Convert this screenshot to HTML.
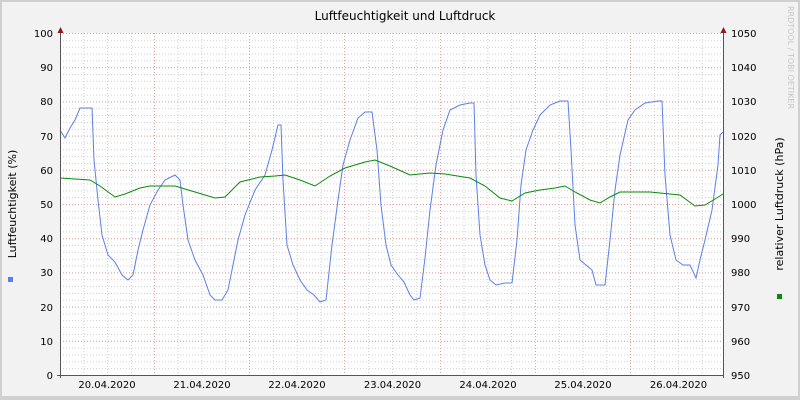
<!DOCTYPE html>
<html><head><meta charset="utf-8"><style>
html,body{margin:0;padding:0;background:#f2f2f2}
svg{display:block}
text{font-family:"DejaVu Sans","Liberation Sans",sans-serif;font-size:10px;fill:#000}
</style></head><body>
<svg width="800" height="400" xmlns="http://www.w3.org/2000/svg">
<defs>
<pattern id="mh" x="0" y="0" width="800" height="6.84" patternUnits="userSpaceOnUse" patternTransform="translate(0,33)">
<line x1="0" y1="0.5" x2="800" y2="0.5" stroke="#cfcfcf" stroke-dasharray="1,2"/>
</pattern>
</defs>
<rect x="0" y="0" width="800" height="400" fill="#d0d0d0"/>
<rect x="2" y="2" width="796" height="394" fill="#f2f2f2"/>
<rect x="60" y="33" width="664" height="342" fill="#fff"/>
<rect x="60" y="33" width="664" height="342" fill="url(#mh)"/>
<g stroke="#cfcfcf" stroke-dasharray="1,2">
<line x1="83.8" y1="33" x2="83.8" y2="375"/><line x1="107.6" y1="33" x2="107.6" y2="375"/><line x1="131.4" y1="33" x2="131.4" y2="375"/>
<line x1="178.1" y1="33" x2="178.1" y2="375"/><line x1="201.9" y1="33" x2="201.9" y2="375"/><line x1="225.7" y1="33" x2="225.7" y2="375"/>
<line x1="273.4" y1="33" x2="273.4" y2="375"/><line x1="297.2" y1="33" x2="297.2" y2="375"/><line x1="321" y1="33" x2="321" y2="375"/>
<line x1="368.7" y1="33" x2="368.7" y2="375"/><line x1="392.5" y1="33" x2="392.5" y2="375"/><line x1="416.3" y1="33" x2="416.3" y2="375"/>
<line x1="464" y1="33" x2="464" y2="375"/><line x1="487.8" y1="33" x2="487.8" y2="375"/><line x1="511.6" y1="33" x2="511.6" y2="375"/>
<line x1="559.3" y1="33" x2="559.3" y2="375"/><line x1="583.1" y1="33" x2="583.1" y2="375"/><line x1="606.9" y1="33" x2="606.9" y2="375"/>
<line x1="654.6" y1="33" x2="654.6" y2="375"/><line x1="678.4" y1="33" x2="678.4" y2="375"/><line x1="702.2" y1="33" x2="702.2" y2="375"/>
</g>
<g stroke="#e0a0a0" stroke-dasharray="1,2">
<line x1="154.5" y1="33" x2="154.5" y2="375"/><line x1="249.5" y1="33" x2="249.5" y2="375"/><line x1="344.5" y1="33" x2="344.5" y2="375"/>
<line x1="440.5" y1="33" x2="440.5" y2="375"/><line x1="535.5" y1="33" x2="535.5" y2="375"/><line x1="630.5" y1="33" x2="630.5" y2="375"/>
<line x1="60" y1="33.5" x2="724" y2="33.5"/><line x1="60" y1="67.7" x2="724" y2="67.7"/><line x1="60" y1="101.9" x2="724" y2="101.9"/>
<line x1="60" y1="136.1" x2="724" y2="136.1"/><line x1="60" y1="170.3" x2="724" y2="170.3"/><line x1="60" y1="204.5" x2="724" y2="204.5"/>
<line x1="60" y1="238.7" x2="724" y2="238.7"/><line x1="60" y1="272.9" x2="724" y2="272.9"/><line x1="60" y1="307.1" x2="724" y2="307.1"/>
<line x1="60" y1="341.3" x2="724" y2="341.3"/>
</g>
<polyline fill="none" stroke="#5b7fe8" stroke-width="1" points="60,130 65,138 70,128 75,120 80,108 84,108 92,108 94,160 98,200 102,235 108,255 115,262 122,275 128,280 133,275 138,250 143,230 150,205 158,190 165,180 175,175 180,180 183,205 188,240 195,260 203,275 210,295 215,300 222,300 228,290 233,265 238,240 245,215 255,190 265,175 272,150 278,125 281,125 283,180 287,245 293,265 300,280 307,290 314,295 320,302 326,300 332,245 338,200 343,165 350,140 358,118 365,112 372,112 377,150 381,205 386,245 391,265 398,275 404,282 410,295 414,300 420,298 425,258 430,210 436,165 443,130 450,110 460,105 470,103 474,103 476,175 480,235 485,265 490,280 496,285 505,283 512,283 517,240 521,185 526,150 533,130 540,115 550,105 560,101 568,101 571,150 575,225 580,260 586,265 592,270 596,285 605,285 610,240 615,190 620,155 628,120 635,110 645,103 658,101 662,101 665,175 670,235 676,260 683,265 690,265 696,278 700,260 705,240 712,210 718,165 720,135 723,132"/>
<polyline fill="none" stroke="#0a8a0a" stroke-width="1" points="60,178 90,180 100,186 115,197 125,194 140,188 150,186 175,186 195,192 215,198 225,197 240,182 260,177 275,176 285,175 300,180 315,186 330,176 345,168 365,162 375,160 390,166 410,175 430,173 445,174 470,178 485,186 500,198 512,201 525,193 540,190 555,188 565,186 575,192 590,200 600,203 610,197 620,192 650,192 680,195 695,206 705,205 715,199 723,194"/>
<line x1="60.5" y1="30" x2="60.5" y2="378" stroke="#555"/>
<line x1="723.5" y1="30" x2="723.5" y2="378" stroke="#555"/>
<line x1="57" y1="375.5" x2="724" y2="375.5" stroke="#555"/>
<polygon points="57.5,33 63.5,33 60.5,27" fill="#8b1a1a"/>
<polygon points="720.5,33 726.5,33 723.5,27" fill="#8b1a1a"/>
<text x="405" y="20" text-anchor="middle" font-size="12" style="font-size:12px">Luftfeuchtigkeit und Luftdruck</text>
<g text-anchor="end">
<text x="53" y="37">100</text><text x="53" y="71">90</text><text x="53" y="105">80</text><text x="53" y="140">70</text><text x="53" y="174">60</text><text x="53" y="208">50</text><text x="53" y="242">40</text><text x="53" y="276">30</text><text x="53" y="311">20</text><text x="53" y="345">10</text><text x="53" y="379">0</text>
</g>
<g>
<text x="731" y="37">1050</text><text x="731" y="71">1040</text><text x="731" y="105">1030</text><text x="731" y="140">1020</text><text x="731" y="174">1010</text><text x="731" y="208">1000</text><text x="731" y="242">990</text><text x="731" y="276">980</text><text x="731" y="311">970</text><text x="731" y="345">960</text><text x="731" y="379">950</text>
</g>
<g text-anchor="middle">
<text x="107" y="388">20.04.2020</text><text x="202" y="388">21.04.2020</text><text x="297" y="388">22.04.2020</text><text x="392.5" y="388">23.04.2020</text><text x="488" y="388">24.04.2020</text><text x="583" y="388">25.04.2020</text><text x="678.5" y="388">26.04.2020</text>
</g>
<text transform="translate(16,204) rotate(-90)" text-anchor="middle" style="font-size:11px">Luftfeuchtigkeit (%)</text>
<text transform="translate(783,204) rotate(-90)" text-anchor="middle" style="font-size:11px">relativer Luftdruck (hPa)</text>
<text transform="translate(788,6) rotate(90)" style="font-size:8px;fill:#c8c8c8">RRDTOOL / TOBI OETIKER</text>
<rect x="8" y="277" width="5" height="5" fill="#5b7fe8"/>
<rect x="777" y="294" width="5" height="5" fill="#0a8a0a"/>
</svg>
</body></html>
